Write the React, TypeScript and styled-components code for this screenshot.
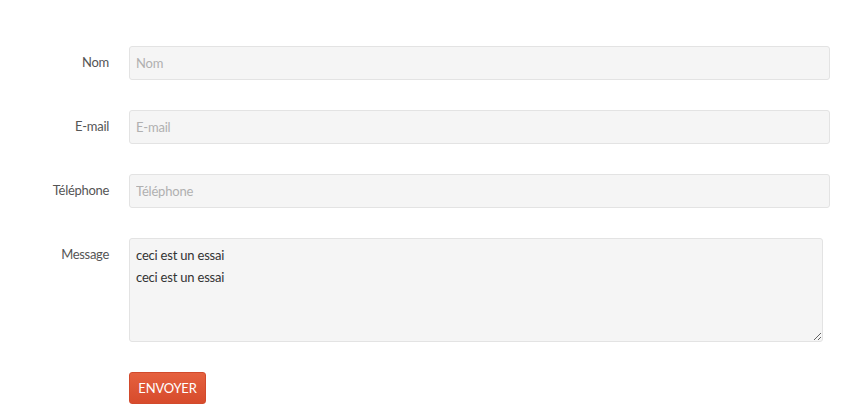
import styled, { createGlobalStyle } from "styled-components";

const GlobalStyle = createGlobalStyle`
  body {
    margin: 0;
    background: #fff;
    font-family: Lato, "Open Sans", sans-serif;
  }
`;

const Form = styled.form`
  display: grid;
  grid-template-columns: 109px 1fr;
  column-gap: 20px;
  row-gap: 30px;
  padding: 46px 18px 0 0;
  width: 848px;
  box-sizing: border-box;
`;

const Label = styled.label<{ top?: boolean }>`
  text-align: right;
  font-size: 13px;
  letter-spacing: -0.3px;
  color: #555;
  align-self: ${(props) => (props.top ? "start" : "center")};
  padding-top: ${(props) => (props.top ? 8 : 0)}px;
  margin-top: ${(props) => (props.top ? 0 : -3)}px;
`;

const Input = styled.input`
  height: 34px;
  box-sizing: border-box;
  border: 1px solid #e3e3e3;
  border-radius: 3px;
  background: #f5f5f5;
  padding: 0 6px;
  font-family: inherit;
  font-size: 13px;
  letter-spacing: -0.2px;
  color: #333;
  outline: none;

  &::placeholder {
    color: #b0b0b0;
  }
`;

const TextArea = styled.textarea`
  height: 104px;
  width: 694px;
  box-sizing: border-box;
  border: 1px solid #e3e3e3;
  border-radius: 3px;
  background: #f5f5f5;
  padding: 5px 6px;
  font-family: inherit;
  font-size: 13px;
  letter-spacing: -0.2px;
  line-height: 22px;
  color: #333;
  outline: none;
  resize: both;
`;

const Button = styled.button`
  grid-column: 2;
  justify-self: start;
  width: 77px;
  height: 32px;
  border: 1px solid #d24a2c;
  border-radius: 3px;
  background: linear-gradient(#e5613f, #d74b2c);
  color: #fff;
  font-family: inherit;
  font-size: 13px;
  letter-spacing: -0.2px;
  cursor: pointer;
`;

export default function App() {
  return (
    <>
      <GlobalStyle />
      <Form onSubmit={(e) => e.preventDefault()}>
        <Label>Nom</Label>
        <Input placeholder="Nom" />
        <Label>E-mail</Label>
        <Input placeholder="E-mail" />
        <Label>Téléphone</Label>
        <Input placeholder="Téléphone" />
        <Label top>Message</Label>
        <TextArea defaultValue={"ceci est un essai\nceci est un essai"} />
        <Button type="submit">ENVOYER</Button>
      </Form>
    </>
  );
}
